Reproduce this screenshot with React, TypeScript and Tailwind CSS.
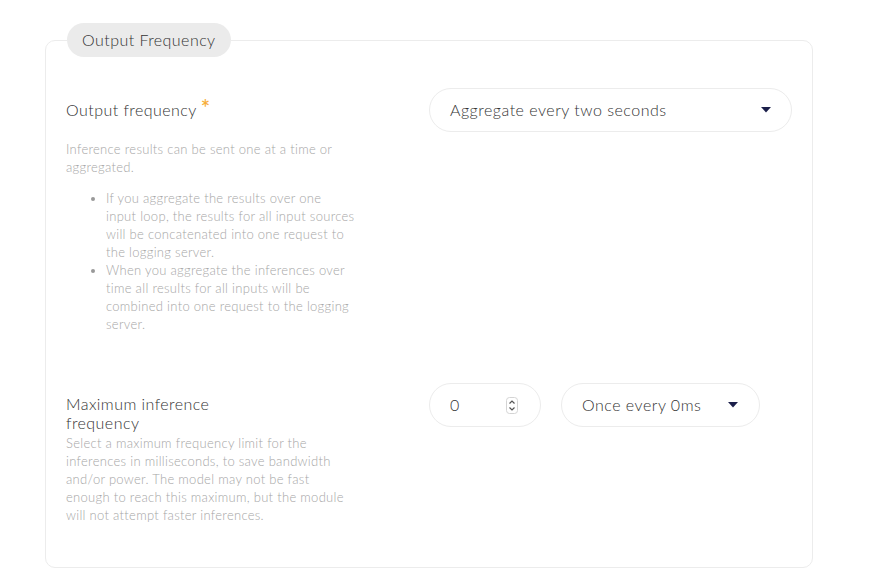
import React from "react";

const Caret = () => (
  <svg width="10" height="6" viewBox="0 0 10 6" className="shrink-0">
    <path d="M0 0h10L5 5.5z" fill="#1b1f4a" />
  </svg>
);

const Spinner = () => (
  <svg width="12" height="17" viewBox="0 0 12 17" className="shrink-0">
    <rect x="0.5" y="0.5" width="11" height="16" rx="3" fill="#fff" stroke="#d4d4d4" />
    <path d="M3.5 6.5L6 4l2.5 2.5" fill="none" stroke="#555" strokeWidth="1.2" />
    <path d="M3.5 10.5L6 13l2.5-2.5" fill="none" stroke="#555" strokeWidth="1.2" />
  </svg>
);

const App: React.FC = () => {
  return (
    <div
      className="min-h-[587px] bg-white pl-[45px] pr-[59px] pt-[23px] text-[#333]"
      style={{ fontFamily: "Lato, 'Open Sans', sans-serif" }}
    >
      <fieldset className="rounded-[10px] border border-[#ececec] px-5 pt-[31px] pb-[43px]">
        <legend className="ml-px rounded-full bg-[#ebebeb] px-[15px] h-[34px] leading-[34px] text-base font-light tracking-[0.45px] text-[#333]">
          Output Frequency
        </legend>

        {/* Output frequency */}
        <div className="grid grid-cols-2">
          <div className="w-[290px]">
            <div className="flex h-11 items-center text-base font-light tracking-[0.45px]">
              Output frequency
              <span className="ml-[4px] mt-[-4px] text-[22px] leading-none font-semibold text-[#f7ad3a]">*</span>
            </div>
            <div className="mt-2 text-[13px] leading-[18px] font-light tracking-[0.3px] text-[#a6a6a6]">
              <p>Inference results can be sent one at a time or aggregated.</p>
              <ul className="mt-[13px] -mr-[6px] list-disc pl-10 marker:text-[#999]">
                <li>
                  If you aggregate the results over one
                  <br />
                  input loop, the results for all input sources will be concatenated into one
                  request to the logging server.
                </li>
                <li>
                  When you aggregate the inferences over time all results for all inputs will be
                  combined into one request to the logging server.
                </li>
              </ul>
            </div>
          </div>
          <div>
            <div className="flex h-11 items-center justify-between rounded-full border border-[#ececec] pl-5 pr-5 text-base font-light tracking-[0.5px]">
              <span>Aggregate every two seconds</span>
              <Caret />
            </div>
          </div>
        </div>

        {/* Maximum inference frequency */}
        <div className="mt-[50px] grid grid-cols-2">
          <div className="w-[290px] pt-[11px]">
            <div className="max-w-[180px] text-base leading-[19px] font-light tracking-[0.45px]">
              Maximum inference frequency
            </div>
            <p className="mt-[2px] text-[13px] leading-[18px] font-light tracking-[0.3px] text-[#a6a6a6]">
              Select a maximum frequency limit for the inferences in milliseconds, to save
              bandwidth and/or power. The model may not be fast enough to reach this maximum, but
              the module will not attempt faster inferences.
            </p>
          </div>
          <div className="flex items-start gap-5">
            <div className="flex h-11 w-[112px] items-center justify-between rounded-full border border-[#ececec] pl-5 pr-[22px] text-base font-light">
              <input
                type="number"
                readOnly
                value={0}
                className="w-10 bg-transparent outline-none [appearance:textfield] [&::-webkit-inner-spin-button]:appearance-none [&::-webkit-outer-spin-button]:appearance-none"
              />
              <Spinner />
            </div>
            <div className="flex h-11 w-[199px] items-center justify-between rounded-full border border-[#ececec] pl-5 pr-[21px] text-base font-light tracking-[0.5px]">
              <span>Once every 0ms</span>
              <Caret />
            </div>
          </div>
        </div>
      </fieldset>
    </div>
  );
};

export default App;
